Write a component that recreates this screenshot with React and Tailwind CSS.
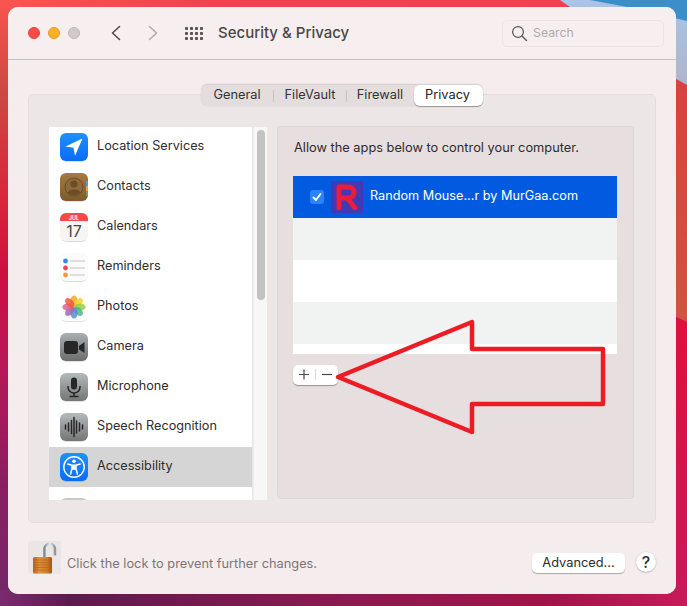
import React from "react";

const font = { fontFamily: "Inter, 'Liberation Sans', sans-serif" };

function Wallpaper() {
  return (
    <svg className="absolute inset-0" width="687" height="606" viewBox="0 0 687 606">
      <defs>
        <linearGradient id="wpLeft" x1="0" y1="0" x2="0" y2="1">
          <stop offset="0" stopColor="#f9544f" />
          <stop offset="0.15" stopColor="#cc4a42" />
          <stop offset="0.33" stopColor="#d8263c" />
          <stop offset="0.45" stopColor="#cc1040" />
          <stop offset="0.6" stopColor="#b81858" />
          <stop offset="0.8" stopColor="#8a1f60" />
          <stop offset="1" stopColor="#72286a" />
        </linearGradient>
        <linearGradient id="wpTop" x1="0" y1="0" x2="1" y2="0">
          <stop offset="0" stopColor="#f9544f" />
          <stop offset="0.3" stopColor="#ee4450" />
          <stop offset="1" stopColor="#f0404e" />
        </linearGradient>
        <linearGradient id="wpBottom" x1="0" y1="0" x2="1" y2="0">
          <stop offset="0" stopColor="#7c2a70" />
          <stop offset="0.1" stopColor="#5e1a4e" />
          <stop offset="0.5" stopColor="#8a1a50" />
          <stop offset="0.8" stopColor="#a01448" />
          <stop offset="1" stopColor="#c81a58" />
        </linearGradient>
        <linearGradient id="wpRightA" x1="0" y1="0" x2="0" y2="1">
          <stop offset="0" stopColor="#d84040" />
          <stop offset="1" stopColor="#cf5440" />
        </linearGradient>
        <linearGradient id="wpRightB" x1="0" y1="0" x2="0" y2="1">
          <stop offset="0" stopColor="#e0103c" />
          <stop offset="1" stopColor="#c8195a" />
        </linearGradient>
        <linearGradient id="wpBand" x1="0" y1="0" x2="0" y2="1">
          <stop offset="0" stopColor="#a9c4e6" />
          <stop offset="1" stopColor="#b0b4cc" />
        </linearGradient>
      </defs>
      <rect width="687" height="606" fill="url(#wpLeft)" />
      <rect width="687" height="8" fill="url(#wpTop)" />
      <rect y="590" width="687" height="16" fill="url(#wpBottom)" />
      <polygon points="660,60 687,60 687,322 660,310" fill="url(#wpRightA)" />
      <polygon points="660,310 687,322 687,590 660,590" fill="url(#wpRightB)" />
      <polygon points="560,0 687,0 687,85 660,70" fill="url(#wpBand)" />
      <polygon points="590,0 687,0 687,21 627,7" fill="#3a8fc9" />
    </svg>
  );
}

function Chevron({ dir, color }) {
  return (
    <svg width="12" height="16" viewBox="0 0 12 16" fill="none">
      <path
        d={dir === "l" ? "M9.5 1.5 L2.5 8 L9.5 14.5" : "M2.5 1.5 L9.5 8 L2.5 14.5"}
        stroke={color}
        strokeWidth="1.6"
        strokeLinecap="round"
        strokeLinejoin="round"
      />
    </svg>
  );
}

function GridIcon() {
  const dots = [];
  for (let r = 0; r < 3; r++)
    for (let c = 0; c < 4; c++)
      dots.push(<rect key={r + "-" + c} x={c * 5} y={r * 5} width="3" height="3" rx="0.7" fill="#5a5656" />);
  return (
    <svg width="18" height="13" viewBox="0 0 18 13">
      {dots}
    </svg>
  );
}

const Ic = ({ children, id, from, to }) => (
  <svg width="28" height="29" viewBox="0 0 28 29" className="shrink-0">
    <defs>
      <linearGradient id={id} x1="0" y1="0" x2="0" y2="1">
        <stop offset="0" stopColor={from} />
        <stop offset="1" stopColor={to} />
      </linearGradient>
    </defs>
    <rect x="0.5" y="1" width="27" height="28" rx="6" fill="#000" opacity="0.12" />
    <rect width="28" height="28" rx="6" fill={`url(#${id})`} />
    {children}
  </svg>
);

const icons = {
  location: (
    <Ic id="i1" from="#1f90ff" to="#0a6cf5">
      <path d="M22.5 5.5 L5.5 13.5 L13.5 14.8 L15 22.8 Z" fill="#fff" />
    </Ic>
  ),
  contacts: (
    <Ic id="i2" from="#a47a42" to="#7d5a2f">
      <rect x="26" y="8" width="2" height="5" fill="#4f9bd9" />
      <rect x="26" y="13" width="2" height="5" fill="#e3a13b" />
      <rect x="26" y="18" width="2" height="5" fill="#6aa84f" />
      <circle cx="14" cy="14" r="9" fill="#8f6a3a" stroke="#6b4c26" strokeWidth="1" />
      <circle cx="14" cy="11" r="3.6" fill="#6b4c26" />
      <path d="M7.5 19.5 C9 15.5 19 15.5 20.5 19.5 C18 22.8 10 22.8 7.5 19.5 Z" fill="#6b4c26" />
    </Ic>
  ),
  calendars: (
    <svg width="28" height="29" viewBox="0 0 28 29" className="shrink-0">
      <rect x="0.5" y="1" width="27" height="28" rx="6" fill="#000" opacity="0.15" />
      <rect width="28" height="28" rx="6" fill="#f6f5f4" />
      <path d="M0 8 V6 a6 6 0 0 1 6 -6 H22 a6 6 0 0 1 6 6 V8 Z" fill="#f4494c" />
      <text x="14" y="6.5" textAnchor="middle" fontSize="5.5" fontWeight="600" fill="#fff" style={font}>JUL</text>
      <text x="14" y="24" textAnchor="middle" fontSize="16" fill="#4a4a4a" style={font}>17</text>
    </svg>
  ),
  reminders: (
    <svg width="28" height="29" viewBox="0 0 28 29" className="shrink-0">
      <rect x="0.5" y="1" width="27" height="28" rx="6" fill="#000" opacity="0.15" />
      <rect width="28" height="28" rx="6" fill="#fbfbfb" />
      <circle cx="5.5" cy="8" r="2.4" fill="#2f86f5" />
      <circle cx="5.5" cy="15" r="2.4" fill="#f0464c" />
      <circle cx="5.5" cy="22" r="2.4" fill="#f79a2e" />
      <path d="M10 8 H25 M10 15 H25 M10 22 H25" stroke="#c2c2c2" strokeWidth="1" />
    </svg>
  ),
  photos: (
    <svg width="28" height="29" viewBox="0 0 28 29" className="shrink-0">
      <rect x="0.5" y="1" width="27" height="28" rx="6" fill="#000" opacity="0.12" />
      <rect width="28" height="28" rx="6" fill="#fdfdfd" />
      {[
        ["#f6a623", 0],
        ["#f5d327", 45],
        ["#9ccc4a", 90],
        ["#4fb58a", 135],
        ["#5a8fd0", 180],
        ["#9a6ab8", 225],
        ["#dc5f92", 270],
        ["#ee5a3c", 315],
      ].map(([c, a]) => (
        <ellipse key={a} cx="14" cy="8" rx="3.6" ry="5.6" fill={c} opacity="0.85" transform={`rotate(${a} 14 14)`} />
      ))}
    </svg>
  ),
  camera: (
    <Ic id="i6" from="#a9b0b2" to="#6d6d6d">
      <rect x="4" y="8" width="14" height="13" rx="3" fill="#272727" />
      <path d="M19 13 L24.5 9 V20 L19 16.5 Z" fill="#272727" />
    </Ic>
  ),
  mic: (
    <Ic id="i7" from="#b4babc" to="#757575">
      <rect x="11" y="4.5" width="6" height="12" rx="3" fill="#272727" />
      <path d="M8 13 V14 a6 6 0 0 0 12 0 V13" fill="none" stroke="#272727" strokeWidth="1.5" />
      <path d="M14 20 V23 M9.5 23.5 H18.5" stroke="#272727" strokeWidth="1.6" />
    </Ic>
  ),
  speech: (
    <Ic id="i8" from="#b4babc" to="#757575">
      <path
        d="M5.5 12 V16 M8.5 10 V18 M11.5 7.5 V20.5 M14 4.5 V23.5 M16.5 8 V20 M19.5 10 V18 M22.5 12 V16"
        stroke="#272727"
        strokeWidth="1.5"
        strokeLinecap="round"
      />
    </Ic>
  ),
  access: (
    <Ic id="i9" from="#1f90ff" to="#0a6cf5">
      <circle cx="14" cy="14" r="10.2" fill="none" stroke="#fff" strokeWidth="1.4" />
      <circle cx="14" cy="8.3" r="1.8" fill="#fff" />
      <path
        d="M7.8 11 L12 12.3 V15.5 L10.6 21 M20.2 11 L16 12.3 V15.5 L17.4 21 M12 12.3 H16 M12.3 16 H15.7"
        fill="none"
        stroke="#fff"
        strokeWidth="1.5"
        strokeLinecap="round"
        strokeLinejoin="round"
      />
      <path d="M12 12.3 H16 V16 H12 Z" fill="#fff" />
    </Ic>
  ),
};

const rows = [
  ["location", "Location Services"],
  ["contacts", "Contacts"],
  ["calendars", "Calendars"],
  ["reminders", "Reminders"],
  ["photos", "Photos"],
  ["camera", "Camera"],
  ["mic", "Microphone"],
  ["speech", "Speech Recognition"],
  ["access", "Accessibility"],
];

function Sidebar() {
  return (
    <div className="w-[218px] h-[373px] flex overflow-hidden shrink-0">
      <div className="w-[203px] bg-white overflow-hidden">
        {rows.map(([k, label]) => (
          <div
            key={k}
            className={`h-10 flex items-center pl-[11px] gap-[9px] text-[12.7px] text-[#2e2c2c] ${
              k === "access" ? "bg-[#d6d5d5]" : ""
            }`}
          >
            {icons[k]}
            <span className="leading-none -mt-[2px]">{label}</span>
          </div>
        ))}
        <div className="h-10 pl-[11px] pt-[11px]">
          <div className="w-7 h-7 rounded-md bg-[#c9c9c9]" />
        </div>
      </div>
      <div className="ml-px w-[14px] bg-[#f7f7f7] border-l border-[#ececec] pl-[3px] pt-[3px]">
        <div className="w-2 h-[170px] rounded bg-[#c2c2c2]" />
      </div>
    </div>
  );
}

function AppTable() {
  return (
    <div className="w-[324px] ml-[15px] flex flex-col">
      <div className="h-[42px] bg-[#015ae0] flex items-center pl-[17px]">
        <div className="w-[14px] h-[14px] rounded-[3px] bg-[#2a84ff] flex items-center justify-center">
          <svg width="10" height="10" viewBox="0 0 10 10" fill="none">
            <path d="M1.5 5.5 L4 8 L8.5 2" stroke="#fff" strokeWidth="1.8" strokeLinecap="round" strokeLinejoin="round" />
          </svg>
        </div>
        <div className="ml-[7px] w-8 h-8 bg-[#4339b5] flex items-center justify-center">
          <svg width="24" height="26" viewBox="0 0 24 26" fill="none">
            <path
              d="M4 24 V3 H13 C21 3 21 14 13 14 H8.5 M12 14 L20 24"
              stroke="#ee1c3c"
              strokeWidth="5"
              strokeLinecap="round"
              strokeLinejoin="round"
            />
          </svg>
        </div>
        <span className="ml-[7px] text-[12.7px] text-white leading-none -mt-[1px]">Random Mouse...r by MurGaa.com</span>
      </div>
      <div className="h-[42px] bg-[#f1f3f2]" />
      <div className="h-[42px] bg-white" />
      <div className="h-[42px] bg-[#f1f3f2]" />
      <div className="h-[10px] bg-white" />
      <div className="mt-[11px] w-[45px] h-5 rounded-[5px] bg-white shadow-[0_1px_1px_rgba(0,0,0,0.35)] flex items-center">
        <svg width="45" height="20" viewBox="0 0 45 20" fill="none">
          <path d="M11 4.5 V14.5 M6 9.5 H16" stroke="#4a4a4a" strokeWidth="1.2" />
          <path d="M22.5 4 V15" stroke="#d8d8d8" strokeWidth="1" />
          <path d="M29 9.5 H39" stroke="#4a4a4a" strokeWidth="1.2" />
        </svg>
      </div>
    </div>
  );
}

function LockIcon() {
  return (
    <div className="w-[33px] h-[33px] rounded-[3px] bg-[#ebe5e6] shrink-0">
      <svg width="33" height="33" viewBox="0 0 33 33" fill="none">
        <defs>
          <linearGradient id="lk" x1="0" y1="0" x2="1" y2="0">
            <stop offset="0" stopColor="#b8641a" />
            <stop offset="0.35" stopColor="#e0913c" />
            <stop offset="0.75" stopColor="#d07c26" />
            <stop offset="1" stopColor="#9c5414" />
          </linearGradient>
          <linearGradient id="sh" x1="0" y1="0" x2="1" y2="0">
            <stop offset="0" stopColor="#7f8c96" />
            <stop offset="0.5" stopColor="#e8eef2" />
            <stop offset="1" stopColor="#8a959d" />
          </linearGradient>
        </defs>
        <path d="M16.5 17 V8 a5.2 5.2 0 0 1 10.4 0 V14.5" stroke="url(#sh)" strokeWidth="2.6" />
        <rect x="5" y="16" width="19" height="16.5" rx="1.5" fill="url(#lk)" />
        <path d="M5 19 H24 M5 21.5 H24 M5 24 H24 M5 26.5 H24 M5 29 H24" stroke="#a85f18" strokeWidth="0.6" />
      </svg>
    </div>
  );
}

export default function App() {
  return (
    <div className="relative w-[687px] h-[606px] overflow-hidden pl-2 pt-[7px]" style={font}>
      <Wallpaper />
      <div className="relative w-[668px] h-[587px] rounded-[10px] bg-[#f5eded] flex flex-col overflow-hidden">
        <div className="h-[53px] shrink-0 border-b border-[#c6bfbf] bg-[#f7efef] flex items-center pl-5 pr-3">
          <div className="flex gap-2 -mt-px">
            <div className="w-3 h-3 rounded-full bg-[#fc4a4a] border border-[#e5403f]" />
            <div className="w-3 h-3 rounded-full bg-[#fdb025] border border-[#e09a1f]" />
            <div className="w-3 h-3 rounded-full bg-[#d0cacb] border border-[#bdb7b8]" />
          </div>
          <div className="ml-[30px] flex items-center gap-[25px]">
            <Chevron dir="l" color="#514d4d" />
            <Chevron dir="r" color="#b0abab" />
          </div>
          <div className="ml-[26px]"><GridIcon /></div>
          <div className="ml-[15px] text-[15px] font-medium text-[#4a4646] leading-none -mt-[1px]">Security &amp; Privacy</div>
          <div className="ml-auto w-[162px] h-[27px] rounded-[5px] border border-[#ece4e4] flex items-center pl-2 gap-[5px]">
            <svg width="17" height="17" viewBox="0 0 17 17" fill="none">
              <circle cx="7" cy="7" r="5.4" stroke="#555" strokeWidth="1.2" />
              <path d="M11 11 L15.5 15.5" stroke="#555" strokeWidth="1.4" strokeLinecap="round" />
            </svg>
            <span className="text-[12.3px] text-[#b0a9a9] leading-none">Search</span>
          </div>
        </div>

        <div className="flex-1 flex flex-col px-5 pt-[34px] bg-[#f5eded]">
          <div className="relative w-[628px] h-[429px] rounded-[5px] bg-[#ede6e6] border border-[#e4dcdc] flex flex-col items-center">
            <div className="-mt-[11px] h-[22px] flex items-center rounded-[6px] bg-[#e4dddd] border-t border-[#d9d2d2] text-[12.8px] text-[#333] w-[282px] shadow-[0_0_0_0.5px_rgba(0,0,0,0.05)]">
              <span className="w-[72px] text-center leading-none">General</span>
              <div className="w-px h-3 bg-[#cbc4c4]" />
              <span className="w-[72px] text-center leading-none">FileVault</span>
              <div className="w-px h-3 bg-[#cbc4c4]" />
              <span className="w-[66px] text-center leading-none">Firewall</span>
              <div className="ml-auto w-[69px] h-[21px] pr-[2px] rounded-[6px] bg-white shadow-[0_1px_1px_rgba(0,0,0,0.35)] flex items-center justify-center text-[#222] leading-none">Privacy</div>
            </div>

            <div className="w-full flex pl-5 mt-[21px]">
              <Sidebar />
              <div className="ml-[10px] w-[357px] h-[373px] rounded-[4px] bg-[#e7dfdf] border border-[#dfd7d7] -mt-px">
                <p className="ml-4 mt-[13px] text-[12.8px] text-[#2e2c2c] leading-4 h-[36px]">Allow the apps below to control your computer.</p>
                <AppTable />
              </div>
            </div>
          </div>

          <div className="flex items-start mt-[18px]">
            <LockIcon />
            <span className="ml-[6px] mt-[15px] text-[12.8px] text-[#7b7676] leading-4">Click the lock to prevent further changes.</span>
            <button className="ml-auto mt-3 w-[93px] h-5 rounded-[5px] bg-white text-[12.8px] text-[#2b2b2b] leading-none shadow-[0_1px_1px_rgba(0,0,0,0.3)]">Advanced...</button>
            <div className="ml-[11px] mt-[11px] w-5 h-5 rounded-full bg-white text-[16px] font-medium text-[#333] flex items-center justify-center shadow-[0_0.5px_1.5px_rgba(0,0,0,0.35)]">?</div>
          </div>
        </div>
      </div>

      <svg className="absolute left-0 top-0 pointer-events-none" width="687" height="606" viewBox="0 0 687 606" fill="none">
        <polygon points="338,377 472,322 472,349 603,349 603,404 472,404 472,432" stroke="#ed1c24" strokeWidth="4.5" strokeLinejoin="round" />
      </svg>
    </div>
  );
}
